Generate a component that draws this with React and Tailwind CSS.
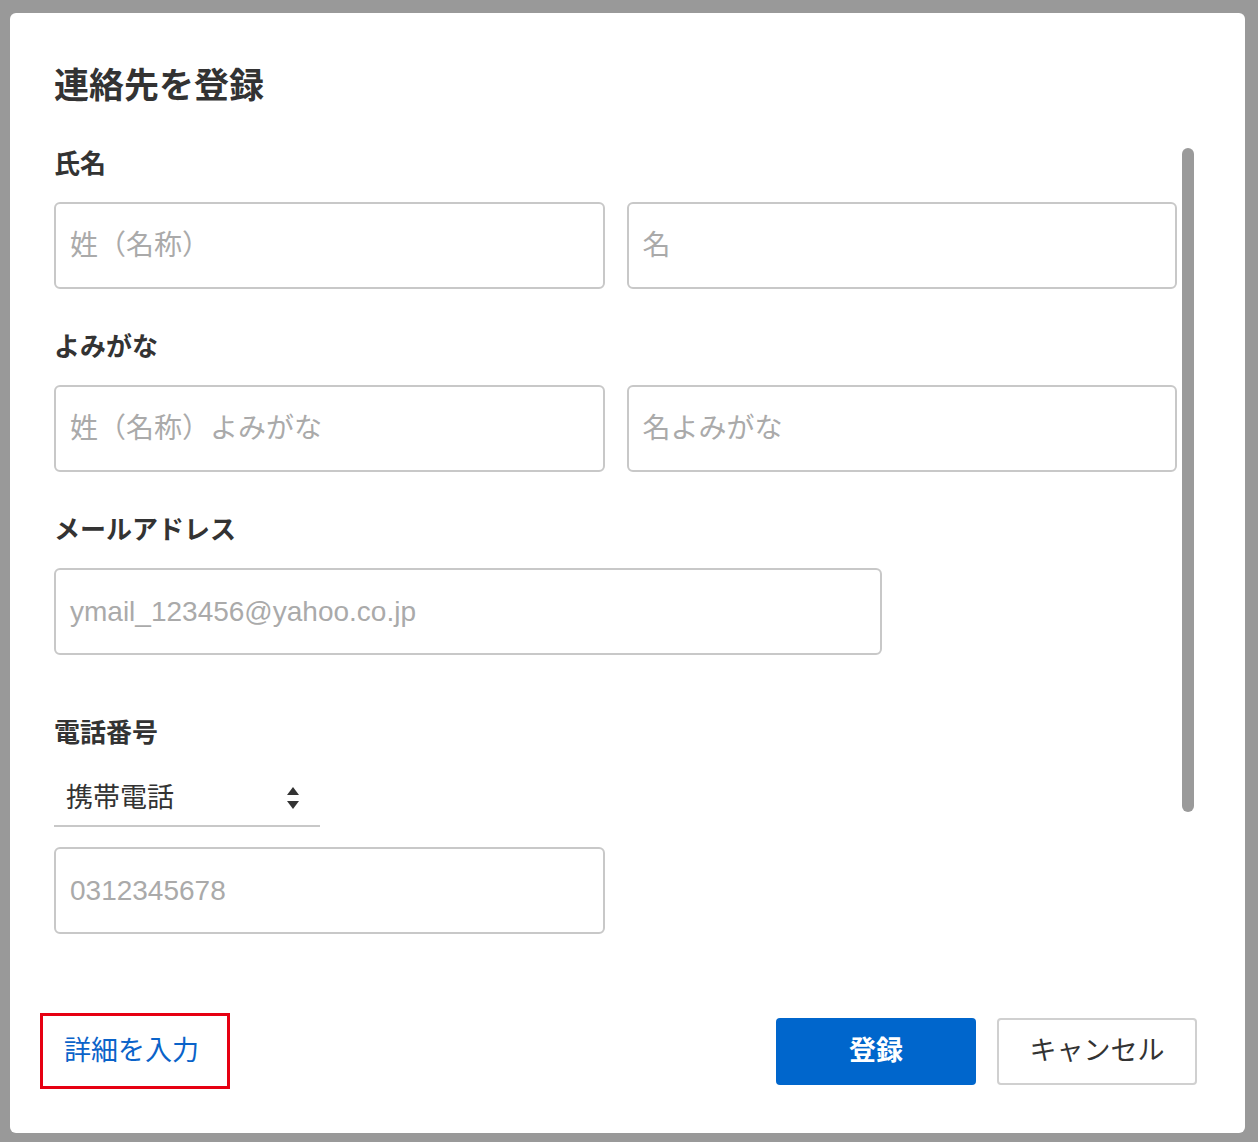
const font = { fontFamily: '"Liberation Sans", "Noto Sans CJK JP", sans-serif' }

function Field({ placeholder, className = 'w-[551px]' }) {
  return (
    <div className={`${className} h-[87px] border-2 border-[#c8c8c8] rounded-[6px] flex items-center px-[14px] text-[28px] text-[#aaaaaa]`}>
      {placeholder}
    </div>
  )
}

function Label({ children, className = '' }) {
  return <div className={`text-[26px] font-bold text-[#333] leading-[36px] ${className}`}>{children}</div>
}

export default function App() {
  return (
    <div className="w-[1258px] h-[1142px] bg-[#999999] pt-[13px] pl-[10px]" style={font}>
      <div className="relative w-[1235px] h-[1120px] bg-white rounded-[6px] pl-[44px] pr-[68px] pt-[49px]">
        <div className="absolute left-[1172px] top-[135px] w-[12px] h-[664px] rounded-full bg-[#9a9a9a]" />
        <div className="text-[35px] font-bold text-[#333] leading-[48px]">連絡先を登録</div>

        <Label className="mt-[36px]">氏名</Label>
        <div className="flex gap-[22px] mt-[20px]">
          <Field placeholder="姓（名称）" />
          <Field placeholder="名" />
        </div>

        <Label className="mt-[40px]">よみがな</Label>
        <div className="flex gap-[22px] mt-[20px]">
          <Field placeholder="姓（名称）よみがな" />
          <Field placeholder="名よみがな" />
        </div>

        <Label className="mt-[40px]">メールアドレス</Label>
        <div className="mt-[20px]">
          <Field placeholder="ymail_123456@yahoo.co.jp" className="w-[828px]" />
        </div>

        <Label className="mt-[60px]">電話番号</Label>
        <div className="mt-[20px] w-[266px] h-[56px] border-b-2 border-[#c8c8c8] flex items-center justify-between pl-[12px] pr-[20px] text-[27px] text-[#333]">
          <span>携帯電話</span>
          <svg width="14" height="24" viewBox="0 0 14 24"><path d="M7 1 L13 9 H1 Z M1 15 H13 L7 23 Z" fill="#333" /></svg>
        </div>
        <div className="mt-[20px]">
          <Field placeholder="0312345678" />
        </div>

        <div className="flex items-center justify-between mt-[79px] -ml-[14px] mr-[-20px]">
          <div className="w-[190px] h-[76px] border-[3px] border-[#e60012] flex items-center pl-[21px] text-[27px] text-[#0a63c9]">詳細を入力</div>
          <div className="flex gap-[21px]">
            <button className="w-[200px] h-[67px] rounded-[4px] bg-[#0066cc] text-white text-[27px] font-bold" style={font}>登録</button>
            <button className="w-[200px] h-[67px] rounded-[4px] border-2 border-[#d0d0d0] bg-white text-[#333] text-[27px]" style={font}>キャンセル</button>
          </div>
        </div>
      </div>
    </div>
  )
}
